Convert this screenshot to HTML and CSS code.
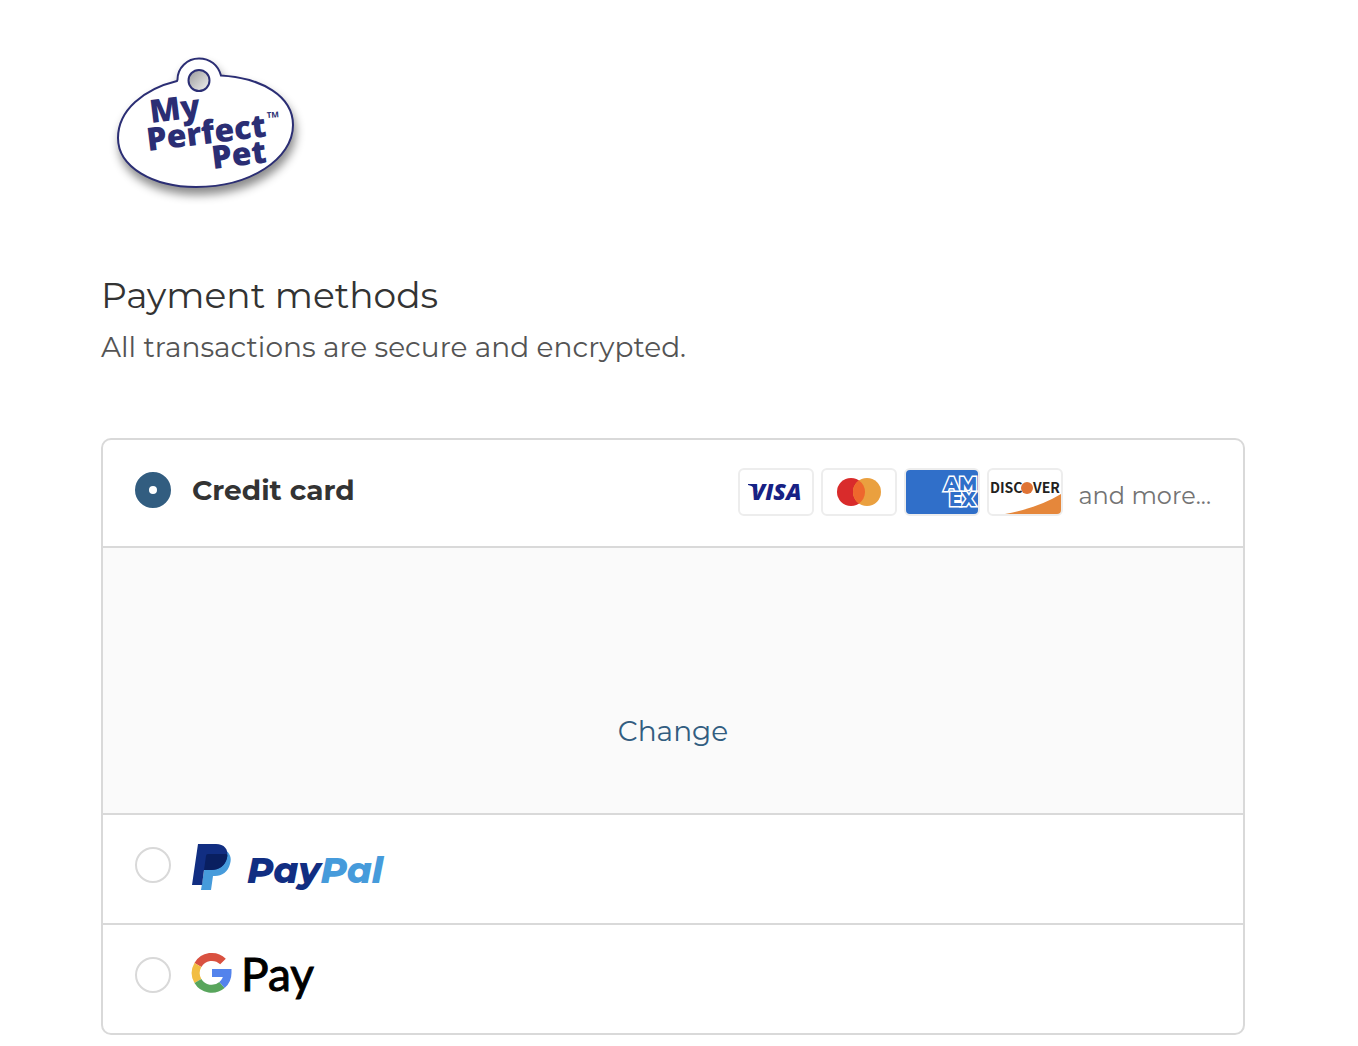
FILE: index.html
```html
<!DOCTYPE html>
<html lang="en">
<head>
    <meta charset="UTF-8">
    <meta name="viewport" content="width=device-width, initial-scale=1">
    <title>Payment methods - My Perfect Pet</title>
    <link rel="stylesheet" href="styles.css">
</head>
<body>
    <main class="checkout">
        <svg class="logo" viewBox="1 0 210 165" role="img" aria-label="My Perfect Pet">
            <defs>
                <linearGradient id="hole" x1="0" y1="0" x2="1" y2="1">
                    <stop offset="0" stop-color="#999"/>
                    <stop offset="1" stop-color="#f2f2f2"/>
                </linearGradient>
            </defs>
            <path class="logo-tag" d="M77 36C44 44 18 65 18 93C18 122 53 142 96 142C150 142 193 114 193 80C193 51 162 33 121 30.500C118 20 110 13.500 99 13.500C87 13.500 77.500 23 77.500 34.500Z"/>
            <circle cx="99" cy="35.500" r="10.500" fill="url(#hole)" stroke="#2b2e74" stroke-width="2"/>
            <g class="logo-text">
                <text transform="translate(51 78) rotate(-7)">My</text>
                <text transform="translate(48 106) rotate(-7)">Perfect</text>
                <text transform="translate(113 124) rotate(-7)">Pet</text>
                <text class="logo-tm" transform="translate(167 73) rotate(-4)">TM</text>
            </g>
        </svg>

        <h1>Payment methods</h1>
        <p class="subtitle">All transactions are secure and encrypted.</p>

        <form class="methods">
            <div class="method method-card">
                <input type="radio" name="method" id="card" checked>
                <label for="card">Credit card</label>
                <div class="brands">
                    <svg class="brand" viewBox="0 0 72 44" role="img" aria-label="Visa">
                        <path d="M8 14h7l3 9c-2-4-5-7-10-8z" fill="#172184"/>
                        <text class="visa" x="11" y="30">VISA</text>
                    </svg>
                    <svg class="brand" viewBox="0 0 72 44" role="img" aria-label="Mastercard">
                        <circle cx="28" cy="22" r="14" fill="#d92b2b"/>
                        <circle cx="44" cy="22" r="14" fill="#eaa03f"/>
                        <path d="M36 10.500a14 14 0 0 1 0 23a14 14 0 0 1 0-23z" fill="#ee672d"/>
                    </svg>
                    <svg class="brand brand-amex" viewBox="0 0 72 44" role="img" aria-label="American Express">
                        <text class="amex" x="38" y="21">AM</text>
                        <text class="amex" x="43" y="36">EX</text>
                    </svg>
                    <svg class="brand" viewBox="0 0 72 44" role="img" aria-label="Discover">
                        <path d="M16 44C38 40 57 33 72 24V44z" fill="#e5873b"/>
                        <text class="discover" x="1" y="23">DISC</text>
                        <circle cx="38" cy="18" r="6" fill="#df7335"/>
                        <text class="discover" x="44" y="23">VER</text>
                    </svg>
                    <span class="more">and more...</span>
                </div>
            </div>

            <div class="panel">
                <a href="#change">Change</a>
            </div>

            <div class="method">
                <input type="radio" name="method" id="paypal">
                <label class="wallet" for="paypal">
                    <svg width="196" height="64" viewBox="0 0 196 64" role="img" aria-label="PayPal">
                        <path d="M16 10H33C38 13 40 18 38 24C36 32 30 36 23 36H21L19 50H9L15 12Z" fill="#469bdb"/>
                        <path d="M6 4H24C32 4 37 9 35 18C33 26 27 30 19 30H12L10 45H0Z" fill="#112e82"/>
                        <path d="M16 14H34.500Q36 15 35 18C33 26 27 30 19 30H12L14 16Q14 14 16 14Z" fill="#091f60"/>
                        <text class="paypal" x="55" y="43">Pay<tspan class="pal">Pal</tspan></text>
                    </svg>
                </label>
            </div>

            <div class="method">
                <input type="radio" name="method" id="gpay">
                <label class="wallet" for="gpay">
                    <svg width="196" height="64" viewBox="0 0 196 64" role="img" aria-label="Google Pay">
                        <g fill="none" stroke-width="8">
                            <path d="M5.900 15A16 16 0 0 1 31 11.500" stroke="#d95140"/>
                            <path d="M5.900 31A16 16 0 0 1 5.900 15" stroke="#f2bd42"/>
                            <path d="M30 35A16 16 0 0 1 5.900 31" stroke="#58a55c"/>
                            <path d="M20 23H35.500C35.500 28 33.500 32 30 35" stroke="#5383ec"/>
                        </g>
                        <text class="gpay" x="49" y="41">Pay</text>
                    </svg>
                </label>
            </div>
        </form>
    </main>
</body>
</html>
```
FILE: styles.css
```css
* {
    box-sizing: border-box;
}
body {
    margin: 0;
    background-color: #fff;
    color: #333;
    font-family: Montserrat, Inter, sans-serif;
    font-size: 28px;
}
.checkout {
    padding: 45px 113px 11px 101px;
}

/* logo */
.logo {
    display: block;
    width: 210px;
    height: 165px;
}
.logo-tag {
    fill: #fff;
    stroke: #2b2e74;
    stroke-width: 2;
    filter: drop-shadow(2px 7px 5px rgba(0, 0, 0, 0.45));
}
.logo-text {
    fill: #2b2e74;
    font-family: "Noto Sans", sans-serif;
    font-size: 32px;
    font-weight: 900;
}
.logo-tm {
    font-size: 8px;
    font-weight: 700;
}

h1 {
    margin: 60px 0 0;
    font-size: 36px;
    font-weight: 400;
    line-height: 50px;
}
.subtitle {
    margin: 6px 0 70px;
    color: #545454;
    line-height: 42px;
}

/* payment method list */
.methods {
    border: 2px solid #d9d9d9;
    border-radius: 10px;
    overflow: hidden;
}
.method {
    display: flex;
    gap: 21px;
    height: 110px;
    padding: 0 32px;
    border-bottom: 2px solid #d9d9d9;
}
.method:last-child {
    height: 108px;
    border-bottom: none;
}
.method-card {
    height: 108px;
}
.method input {
    appearance: none;
    flex: none;
    width: 36px;
    height: 36px;
    margin: 32px 0 0;
    border: 2px solid #d9d9d9;
    border-radius: 50%;
    background-color: #fff;
}
.method input:checked {
    border: 14px solid #325d80;
}
.method label {
    margin-top: 32px;
    font-weight: 700;
    line-height: 36px;
}
.method .wallet {
    margin-top: 25px;
}
.wallet svg {
    display: block;
    overflow: visible;
}
.brands {
    display: flex;
    flex-wrap: wrap;
    gap: 7px;
    margin: 28px 0 0 auto;
}
.brand {
    width: 76px;
    height: 48px;
    border: 2px solid #ededed;
    border-radius: 6px;
}
.brand-amex {
    background-color: #306fc9;
}
.more {
    margin-left: 8px;
    color: #737373;
    font-size: 24px;
    line-height: 56px;
}
.panel {
    padding: 162px 32px 61px;
    border-bottom: 2px solid #d9d9d9;
    background-color: #fafafa;
    line-height: 42px;
    text-align: center;
}
.panel a {
    color: #325d80;
    text-decoration: none;
}

/* brand marks */
.visa {
    fill: #172184;
    font: italic 800 23px "Open Sans", sans-serif;
}
.amex {
    fill: #306fc9;
    stroke: #fff;
    stroke-width: 3;
    paint-order: stroke;
    font: 800 19px Montserrat, Inter, sans-serif;
}
.discover {
    fill: #231f20;
    font: 700 14px "Noto Sans CJK SC", Lato, sans-serif;
}
.paypal {
    fill: #112e82;
    font: italic 800 36px Montserrat, Inter, sans-serif;
}
.pal {
    fill: #469bdb;
}
.gpay {
    fill: #000;
    stroke: #000;
    stroke-width: 1;
    font: 400 46px Lato, sans-serif;
}
```
